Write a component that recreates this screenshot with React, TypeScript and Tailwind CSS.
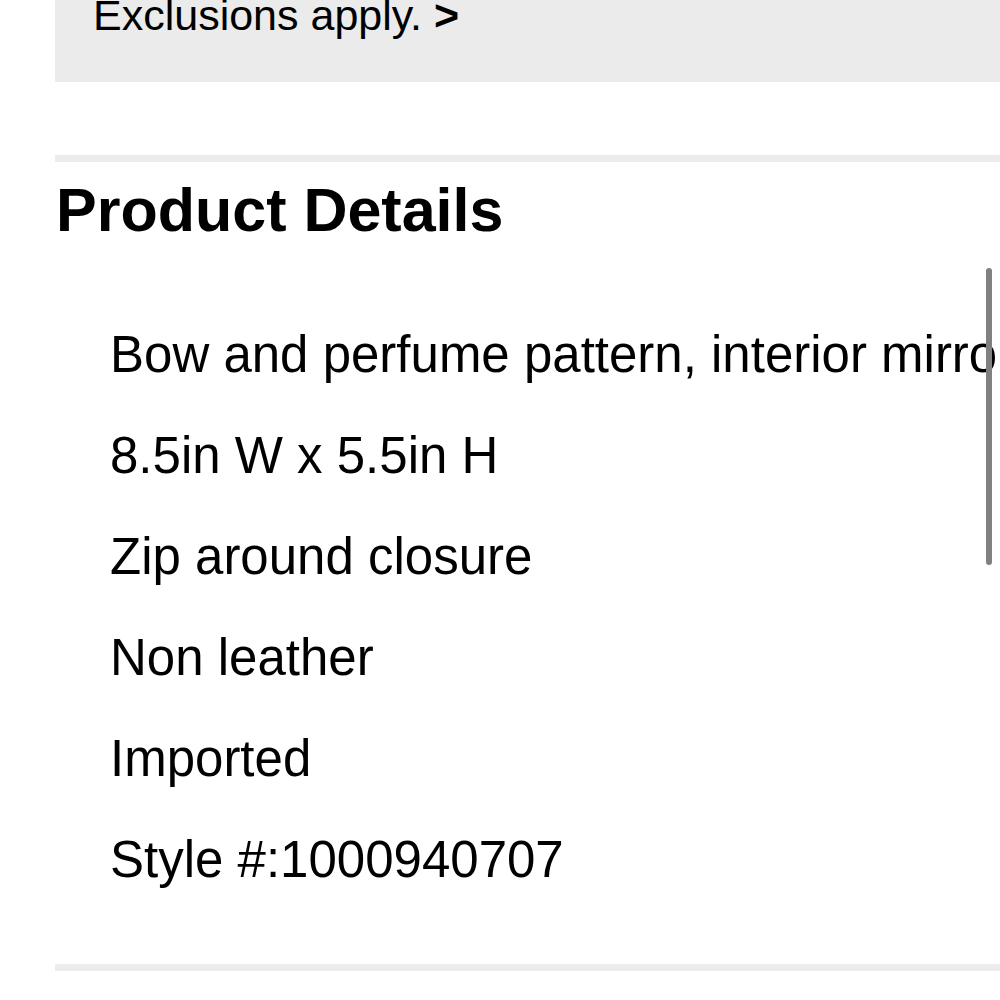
import React from 'react';

const details: string[] = [
  'Bow and perfume pattern, interior mirror, card slots',
  '8.5in W x 5.5in H',
  'Zip around closure',
  'Non leather',
  'Imported',
  'Style #:1000940707',
];

const App: React.FC = () => {
  return (
    <div className="relative w-[1000px] h-[1000px] overflow-hidden bg-white text-black font-['Liberation_Sans',Arial,sans-serif]">
      {/* Promo box */}
      <div className="ml-[55px] h-[82px] bg-[#ebebeb] pl-[38px] overflow-hidden">
        <p className="-mt-[6px] text-[43px] leading-[43px] whitespace-nowrap">
          Exclusions apply. <span className="font-bold">&gt;</span>
        </p>
      </div>

      {/* Product details */}
      <div className="ml-[55px] mt-[73px] h-[7px] bg-[#ececec]"></div>
      <h2 className="ml-[56px] mt-[18px] text-[61px] leading-[60px] font-bold">Product Details</h2>

      <ul className="mt-[64px] pl-[110px]">
        {details.map((item) => (
          <li key={item} className="text-[51px] leading-[101px] whitespace-nowrap">
            {item}
          </li>
        ))}
      </ul>

      <div className="ml-[55px] mt-[54px] h-[7px] bg-[#ececec]"></div>

      {/* Scroll indicator */}
      <div className="absolute left-[986px] top-[268px] w-[6px] h-[297px] rounded-full bg-[#808080]"></div>
    </div>
  );
};

export default App;
